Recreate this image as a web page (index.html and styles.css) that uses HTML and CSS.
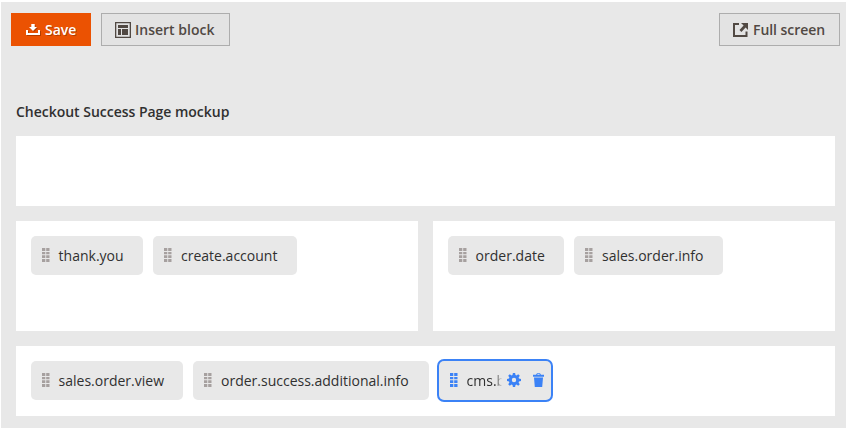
FILE: index.html
```html
<!DOCTYPE html>
<html lang="en">
<head>
<meta charset="utf-8">
<title>Checkout Success Page</title>
<link rel="stylesheet" href="styles.css">
</head>
<body>
<svg class="defs" width="0" height="0" aria-hidden="true">
  <symbol id="grip" viewBox="0 0 8 14">
    <path d="M0 0h3.300v3H0zM4.200 0h3.300v3H4.200zM0 4h3.300v2.300H0zM4.200 4h3.300v2.300H4.200zM0 7.300h3.300V10H0zM4.200 7.300h3.300V10H4.200zM0 11h3.300v3H0zM4.200 11h3.300v3H4.200z"/>
  </symbol>
</svg>
<main class="page">
  <header class="toolbar">
    <button class="btn btn-primary">
      <svg class="icon-save" viewBox="0 0 14 11"><path d="M5.300 0h3.400v3H11L7 7 3 3h2.300zM0 6h2v3h10V6h2v5H0z"/></svg>
      <span>Save</span>
    </button>
    <button class="btn btn-insert">
      <svg class="icon-block" viewBox="0 0 16 16"><path fill-rule="evenodd" d="M0 0h16v16H0zM1.300 1.300v13.400h13.400V1.300z"/><path d="M3 3h10v3H3zM3 7h3v6H3zM7 7h6v6H7z"/></svg>
      <span>Insert block</span>
    </button>
    <button class="btn btn-full">
      <svg class="icon-full" viewBox="0 0 15 14"><path d="M0 0h6v2H2v10h10.500V8.500h2V14H0zM8 0h7v7l-2.400-2.400L8.400 9 6.500 7.100l4.100-4.500z"/></svg>
      <span>Full screen</span>
    </button>
  </header>
  <h1 class="title">Checkout Success Page mockup</h1>
  <div class="mockup">
    <section class="area area-wide"></section>
    <section class="area area-half">
      <div class="chip w-thank"><svg class="grip"><use href="#grip"/></svg><span>thank.you</span></div>
      <div class="chip w-account"><svg class="grip"><use href="#grip"/></svg><span>create.account</span></div>
    </section>
    <section class="area area-half">
      <div class="chip w-date"><svg class="grip"><use href="#grip"/></svg><span>order.date</span></div>
      <div class="chip w-info"><svg class="grip"><use href="#grip"/></svg><span>sales.order.info</span></div>
    </section>
    <section class="area area-wide">
      <div class="chip w-view"><svg class="grip"><use href="#grip"/></svg><span>sales.order.view</span></div>
      <div class="chip w-additional"><svg class="grip"><use href="#grip"/></svg><span>order.success.additional.info</span></div>
      <div class="chip w-cms selected"><svg class="grip"><use href="#grip"/></svg><span class="clipped">cms.b</span>
        <svg class="icon-gear" viewBox="0 0 14 14"><path fill-rule="evenodd" d="M5.900 0h2.200l.4 2 1 .4 1.700-1.200 1.600 1.600-1.200 1.700.4 1 2 .4v2.200l-2 .4-.4 1 1.200 1.700-1.600 1.600-1.700-1.200-1 .4-.4 2H5.900l-.4-2-1-.4-1.700 1.200-1.600-1.600 1.200-1.700-.4-1-2-.4V5.900l2-.4.4-1-1.200-1.700 1.600-1.600 1.700 1.200 1-.4zM7 4.800a2.200 2.200 0 1 0 0 4.400 2.200 2.200 0 0 0 0-4.400z"/></svg>
        <svg class="icon-trash" viewBox="0 0 11 14"><path fill-rule="evenodd" d="M0 1.700h3L4 .3h3l1 1.400h3v2H0zM4.200 1.700h2.600l-.4-.6H4.600zM1 4.500h9L9.200 14H1.800z"/></svg>
      </div>
    </section>
  </div>
</main>
</body>
</html>
```
FILE: styles.css
```css
* { box-sizing: border-box; }
body {
  margin: 0;
  padding: 2px 0 0 1px;
  background: #fff;
  color: #303030;
  font: 14px/20px "Open Sans", "Noto Sans", sans-serif;
  overflow: hidden;
}
svg { display: block; flex: none; fill: currentColor; }
.defs { position: absolute; }
.page { height: 426px; padding: 11px 11px 0 10px; background: #e8e8e8; }
.toolbar { display: flex; gap: 10px; margin-right: -5px; }
.btn {
  display: flex;
  align-items: center;
  height: 33px;
  padding: 0 0 0 13px;
  border: 1px solid #adadad;
  background: #e3e3e3;
  color: #514943;
  font: 600 14px/20px "Open Sans", sans-serif;
  white-space: nowrap;
}
.btn-primary {
  width: 80px;
  border-color: #eb5202;
  background: #eb5202;
  color: #fff;
  text-shadow: 1px 1px 0 rgba(0, 0, 0, .25);
}
.btn-insert { width: 129px; }
.btn-full { width: 121px; margin-left: auto; letter-spacing: -.06px; }
.icon-save { width: 14px; height: 11px; margin: 0 5px 0 1px; filter: drop-shadow(1px 1px 0 rgba(0, 0, 0, .25)); }
.icon-block { width: 16px; height: 16px; margin-right: 4px; }
.icon-full { width: 15px; height: 14px; margin-right: 5px; }
.title { margin: 56px 0 14px 5px; font: 600 14px/20px "Open Sans", sans-serif; letter-spacing: -.02px; }
.mockup { display: grid; grid-template-columns: 402px 402px; gap: 15px; margin-left: 5px; }
.area { display: flex; gap: 10px; padding: 15px; background: #fff; }
.area-wide { grid-column: span 2; height: 70px; }
.area-half { height: 110px; }
.chip {
  display: flex;
  align-items: center;
  height: 39px;
  padding-left: 11px;
  border-radius: 5px;
  background: #e8e8e8;
  white-space: nowrap;
}
.grip { width: 8px; height: 14px; margin: 0 8.6px 1px 0; color: #a6a09f; }
.chip + .chip:not(.selected) .grip { margin-right: 9px; }
.w-thank { width: 112px; }
.w-account { width: 144px; }
.w-date { width: 116px; }
.w-info { width: 149px; }
.w-view { width: 152px; }
.w-additional { width: 236px; }
.w-cms { width: 112px; }
.selected { box-shadow: 0 0 0 2px #3b82f6; }
.selected .grip, .icon-gear, .icon-trash { color: #3b82f6; }
.clipped {
  width: 40px;
  -webkit-mask-image: linear-gradient(90deg, #000 70%, transparent 88%);
  mask-image: linear-gradient(90deg, #000 70%, transparent 88%);
}
.icon-gear { width: 14px; height: 14px; margin: 0 12px 1px .4px; }
.icon-trash { width: 11px; height: 14px; margin-bottom: 1px; }
```
